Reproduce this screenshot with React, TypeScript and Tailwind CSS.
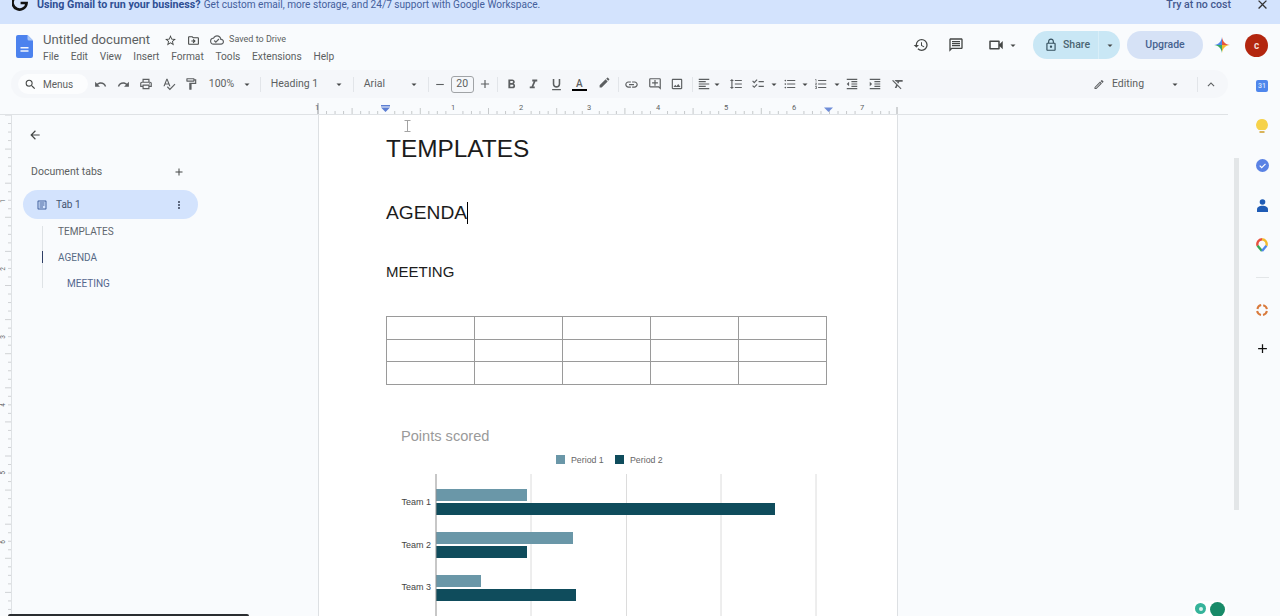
import type { ReactNode } from "react";
import {
  MdAdd,
  MdArrowBack,
  MdArrowDropDown,
  MdClose,
  MdEdit,
  MdExpandLess,
  MdFormatAlignLeft,
  MdFormatBold,
  MdFormatClear,
  MdFormatIndentDecrease,
  MdFormatIndentIncrease,
  MdFormatItalic,
  MdFormatLineSpacing,
  MdFormatListBulleted,
  MdFormatListNumbered,
  MdFormatUnderlined,
  MdHistory,
  MdLink,
  MdMoreVert,
  MdOutlineAddComment,
  MdOutlineArticle,
  MdOutlineChecklist,
  MdOutlineCloudDone,
  MdOutlineDriveFileMove,
  MdOutlineEdit,
  MdOutlineFormatPaint,
  MdOutlineImage,
  MdOutlineLocalPrintshop,
  MdOutlineLock,
  MdOutlineMessage,
  MdOutlineSpellcheck,
  MdOutlineVideocam,
  MdRedo,
  MdRemove,
  MdSearch,
  MdStarBorder,
  MdUndo,
} from "react-icons/md";

const menus = ["File", "Edit", "View", "Insert", "Format", "Tools", "Extensions", "Help"];

export default function App() {
  return (
    <div className="relative flex h-[616px] w-[1280px] flex-col overflow-hidden bg-[#f9fbfd] font-['Roboto',sans-serif] text-[#444746]">
      <Banner />
      <TitleRow />
      <div className="flex min-h-0 flex-1">
        <div className="flex min-w-0 flex-1 flex-col">
          <Toolbar />
          <Ruler />
          <div className="flex min-h-0 flex-1">
            <VerticalRuler />
            <Sidebar />
            <Page />
            <div className="ml-[336px] mt-[43px] h-[352px] w-[5px] bg-[#e3e6e8]" />
          </div>
        </div>
        <SidePanel />
      </div>
      {/* bits lying over the page */}
      <div className="absolute bottom-0 left-[8px] h-[2px] w-[241px] rounded-t-sm bg-[#2a2d30]" />
      <div className="absolute bottom-0 left-[1193px] flex h-[15px] w-[34px] items-start gap-[4px] rounded-t-md bg-white pl-[2px] pt-[1px]">
        <div className="mt-[1px] flex h-[11px] w-[11px] items-center justify-center rounded-full bg-[#35b39a]">
          <div className="h-[4px] w-[4px] rounded-full bg-[#d8f3ec]" />
        </div>
        <div className="h-[15px] w-[15px] rounded-full bg-[#188a68]" />
      </div>
    </div>
  );
}

function Banner() {
  return (
    <div className="h-6 shrink-0 overflow-hidden bg-[#d3e3fd]">
      <div className="relative flex h-[10px] items-center text-[10.1px] leading-[10px] text-[#44609c]">
        <svg viewBox="0 0 16 16" className="absolute left-[12px] top-[-5px] h-[16px] w-[16px]" fill="none">
          <path d="M13.4 3.6A7 7 0 1 0 14.6 8H8.6" stroke="#111" strokeWidth="2.6" />
        </svg>
        <span className="ml-[37px] text-[10.7px] font-bold text-[#2f4f94]">Using Gmail to run your business?</span>
        <span className="ml-[3px]">Get custom email, more storage, and 24/7 support with Google Workspace.</span>
        <span className="ml-auto text-[10.6px] font-medium text-[#44598f]">Try at no cost</span>
        <MdClose className="-mt-[2px] ml-[24px] mr-[10px] text-[#333] text-[15px]" />
      </div>
    </div>
  );
}

function TitleRow() {
  return (
    <div className="flex h-[42px] shrink-0 items-start">
      <DocsLogo />
      <div className="ml-[10px] pt-[9px]">
        <div className="flex h-[14px] items-center">
          <span className="text-[13.1px] text-[#5c5f61]">Untitled document</span>
          <MdStarBorder className="ml-[14px] text-[13px] text-[#444746]" />
          <MdOutlineDriveFileMove className="ml-[10px] text-[13px] text-[#444746]" />
          <MdOutlineCloudDone className="ml-[10px] text-[14px] text-[#5c5f61]" />
          <span className="ml-[5px] text-[9px] text-[#5c5f61]">Saved to Drive</span>
        </div>
        <div className="mt-[3px] flex h-[14px] items-center gap-[11.7px] text-[10.2px] text-[#5c5f61]">
          {menus.map((m) => (
            <span key={m}>{m}</span>
          ))}
        </div>
      </div>
      <div className="ml-auto mr-[12px] mt-[7px] flex h-[28px] items-center">
        <MdHistory className="text-[16px] text-[#444746]" />
        <MdOutlineMessage className="ml-[19px] text-[16px] text-[#444746]" />
        <MdOutlineVideocam className="ml-[23px] text-[18px] text-[#444746]" />
        <Caret className="ml-[2px]" />
        <div className="ml-[14px] flex h-[28px] w-[87px] items-center rounded-full bg-[#c9e7f5] text-[10.5px] font-medium text-[#4b6472]">
          <MdOutlineLock className="ml-[11px] text-[14px] text-[#35505e]" />
          <span className="ml-[5px]">Share</span>
          <div className="ml-auto flex h-full w-[22px] items-center justify-center border-l border-[#d8eef8]">
            <Caret className="text-[#35505e]" />
          </div>
        </div>
        <div className="ml-[7px] flex h-[28px] w-[76px] items-center justify-center rounded-full bg-[#d6e2f6] text-[10.5px] font-medium text-[#47628f]">
          Upgrade
        </div>
        <GeminiMark />
        <div className="ml-[15px] flex h-[23px] w-[23px] items-center justify-center rounded-full bg-[#b3260f] text-[10px] font-bold text-[#f5dcd6]">
          c
        </div>
      </div>
    </div>
  );
}

function DocsLogo() {
  return (
    <svg viewBox="0 0 17 23" className="ml-[16px] mt-[11px] h-[23px] w-[17px] shrink-0">
      <path d="M2 0h9.5L17 5.5V21a2 2 0 0 1-2 2H2a2 2 0 0 1-2-2V2a2 2 0 0 1 2-2z" fill="#4c82ee" />
      <path d="M11.5 0L17 5.5h-4a1.5 1.5 0 0 1-1.5-1.5z" fill="#a9c6f7" />
      <path d="M4.5 12h8v1.4h-8zM4.5 15.3h8v1.4h-8z" fill="#f2f6fd" />
    </svg>
  );
}

function GeminiMark() {
  return (
    <svg viewBox="0 0 16 16" className="ml-[11px] h-[16px] w-[16px] shrink-0">
      <path d="M8 0C8.6 4.6 11.4 7.4 16 8H8z" fill="#e8563f" />
      <path d="M8 0C7.4 4.6 4.6 7.4 0 8h8z" fill="#4f86ec" />
      <path d="M0 8C4.6 8.6 7.4 11.4 8 16V8z" fill="#37a866" />
      <path d="M8 16C8.6 11.4 11.4 8.6 16 8H8z" fill="#f2bb2f" />
    </svg>
  );
}

function Caret({ className = "" }: { className?: string }) {
  return <MdArrowDropDown className={`w-[12px] shrink-0 text-[15px] text-[#444746] ${className}`} />;
}

function Divider({ className = "" }: { className?: string }) {
  return <div className={`h-[15px] w-px shrink-0 bg-[#e2e5e9] ${className}`} />;
}

function Cell({ children, className = "" }: { children: ReactNode; className?: string }) {
  return <div className={`flex h-full w-[22.75px] shrink-0 items-center justify-center ${className}`}>{children}</div>;
}

function Toolbar() {
  return (
    <div className="ml-[11px] mt-1 flex h-[28px] w-[1217px] shrink-0 items-center rounded-full bg-[#f5f7fa] text-[10.5px] text-[#5c5f61]">
      <div className="ml-[7px] flex h-[20px] w-[70px] shrink-0 items-center rounded-full bg-[#fcfdfe]">
        <MdSearch className="ml-[6px] text-[13px] text-[#444746]" />
        <span className="ml-[6px] text-[10px]">Menus</span>
      </div>
      <Cell className="ml-[1px]"><MdUndo className="text-[13px]" /></Cell>
      <Cell><MdRedo className="text-[13px]" /></Cell>
      <Cell><MdOutlineLocalPrintshop className="text-[14px]" /></Cell>
      <Cell><MdOutlineSpellcheck className="text-[14px]" /></Cell>
      <Cell><MdOutlineFormatPaint className="text-[14px]" /></Cell>
      <span className="ml-[6px] w-[26px] shrink-0">100%</span>
      <Caret className="ml-[6px]" />
      <Divider className="ml-[7px]" />
      <span className="ml-[10px] w-[62px] shrink-0">Heading 1</span>
      <Caret />
      <Divider className="ml-[8px]" />
      <span className="ml-[10px] w-[44px] shrink-0">Arial</span>
      <Caret />
      <Divider className="ml-[8px]" />
      <MdRemove className="ml-[4px] w-[14px] shrink-0 text-[13px]" />
      <div className="ml-[4px] flex h-[17px] w-[23px] shrink-0 items-center justify-center rounded-[3px] border border-[#a0a3a6] text-[10.5px]">
        20
      </div>
      <MdAdd className="ml-[4px] w-[14px] shrink-0 text-[14px]" />
      <Divider className="ml-[5px]" />
      <Cell className="ml-[2px]"><MdFormatBold className="text-[15px]" /></Cell>
      <Cell><MdFormatItalic className="text-[15px]" /></Cell>
      <Cell><MdFormatUnderlined className="text-[15px]" /></Cell>
      <Cell>
        <div className="flex flex-col items-center">
          <span className="text-[10px] font-medium leading-[11px]">A</span>
          <div className="h-[2px] w-[15px] bg-black" />
        </div>
      </Cell>
      <Cell className="ml-[2.5px]"><MdEdit className="mb-[3px] text-[13px]" /></Cell>
      <Divider className="ml-[2px]" />
      <Cell className="ml-[1.5px]"><MdLink className="text-[15px]" /></Cell>
      <Cell><MdOutlineAddComment className="text-[14px]" /></Cell>
      <Cell><MdOutlineImage className="text-[14px]" /></Cell>
      <Divider className="ml-[3.5px]" />
      <MdFormatAlignLeft className="ml-[4px] w-[14px] shrink-0 text-[14px]" />
      <Caret />
      <MdFormatLineSpacing className="ml-[6px] w-[14px] shrink-0 text-[14px]" />
      <MdOutlineChecklist className="ml-[8px] w-[14px] shrink-0 text-[14px]" />
      <Caret className="ml-[3px]" />
      <MdFormatListBulleted className="ml-[3px] w-[14px] shrink-0 text-[14px]" />
      <Caret className="ml-[2px]" />
      <MdFormatListNumbered className="ml-[3px] w-[14px] shrink-0 text-[14px]" />
      <Caret className="ml-[3px]" />
      <MdFormatIndentDecrease className="ml-[2px] w-[14px] shrink-0 text-[14px]" />
      <MdFormatIndentIncrease className="ml-[9px] w-[14px] shrink-0 text-[14px]" />
      <MdFormatClear className="ml-[9px] w-[14px] shrink-0 text-[14px]" />
      <div className="ml-auto flex items-center pr-[10px]">
        <MdOutlineEdit className="w-[12px] text-[13px]" />
        <span className="ml-[7px] w-[33px] text-[10.5px]">Editing</span>
        <Caret className="ml-[24px]" />
        <Divider className="ml-[16px]" />
        <MdExpandLess className="ml-[6px] w-[14px] text-[15px]" />
      </div>
    </div>
  );
}

function Ruler() {
  const ticks = Array.from({ length: 68 }, (_, i) => i);
  return (
    <div className="h-[17px] w-[1228px] shrink-0 border-b border-[#dfe2e5]">
      <svg viewBox="0 0 1228 16" className="h-[16px] w-[1228px]">
        {ticks.map((i) => {
          const x = 318 + i * 8.525;
          const h = i % 8 === 0 ? 0 : i % 4 === 0 ? 6 : 3;
          return h > 0 && x < 897 ? (
            <line key={i} x1={x} x2={x} y1={16 - h} y2={16} stroke="#b9bcbe" strokeWidth="0.8" />
          ) : null;
        })}
        <line x1="318" x2="318" y1="5" y2="16" stroke="#8f9296" />
        <line x1="897" x2="897" y1="9" y2="16" stroke="#a9acae" />
        {[
          [317, "1"],
          [453, "1"],
          [521, "2"],
          [589, "3"],
          [658, "4"],
          [726, "5"],
          [794, "6"],
          [862, "7"],
        ].map(([x, t]) => (
          <text key={x} x={x} y="12" textAnchor="middle" fontSize="7.5" fill="#5c5f61" fontFamily="Roboto, sans-serif">
            {t}
          </text>
        ))}
        <path d="M381 7h9v1.5h-9zM381 9.5h9L385.5 14z" fill="#5d7fd3" />
        <path d="M824 9.5h9L828.5 14z" fill="#6f8dd8" />
      </svg>
    </div>
  );
}

function VerticalRuler() {
  const ticks = Array.from({ length: 60 }, (_, i) => i);
  return (
    <div className="h-full w-[12px] shrink-0 border-r border-[#dfe2e5]">
      <svg viewBox="0 0 11 501" className="h-[501px] w-[11px]">
        {ticks.map((i) => (
          <line key={i} x1={i % 4 === 0 ? 5 : 8} x2="11" y1={i * 8.525} y2={i * 8.525} stroke="#c5c8ca" strokeWidth="0.8" />
        ))}
        {[
          [86, "1"],
          [154, "2"],
          [222, "3"],
          [290, "4"],
          [358, "5"],
          [427, "6"],
        ].map(([y, t]) => (
          <text
            key={y}
            x="5"
            y={y}
            textAnchor="middle"
            fontSize="6.5"
            fill="#5c5f61"
            fontFamily="Roboto, sans-serif"
            transform={`rotate(-90 5 ${y})`}
          >
            {t}
          </text>
        ))}
      </svg>
    </div>
  );
}

function Sidebar() {
  return (
    <div className="w-[306px] shrink-0 text-[10.5px]">
      <MdArrowBack className="ml-[16px] mt-[13px] text-[14px] text-[#444746]" />
      <div className="ml-[19px] mt-[23px] flex h-[14px] w-[154px] items-center justify-between text-[#5c5f61]">
        <span>Document tabs</span>
        <MdAdd className="text-[12px] text-[#444746]" />
      </div>
      <div className="ml-[11px] mt-[11px] flex h-[29px] w-[175px] items-center rounded-full bg-[#d3e3fd] text-[#44536f]">
        <MdOutlineArticle className="ml-[13px] text-[12px] text-[#3f5f9c]" />
        <span className="ml-[8px] text-[10px]">Tab 1</span>
        <MdMoreVert className="ml-auto mr-[13px] text-[12px] text-[#444f63]" />
      </div>
      <div className="ml-[30px] mt-[7px] flex h-[62px] flex-col border-l border-[#dfe3e6] text-[10px]">
        <span className="-mt-2 ml-[15px] flex h-[26px] shrink-0 items-center text-[#60666d]">TEMPLATES</span>
        <span className="relative ml-[15px] flex h-[26px] shrink-0 items-center text-[#566a85]">
          AGENDA
          <span className="absolute left-[-16px] top-[7px] h-[12px] w-px bg-[#2f3f66]" />
        </span>
        <span className="ml-[24px] flex h-[26px] shrink-0 items-center text-[#55678f]">MEETING</span>
      </div>
    </div>
  );
}

function Page() {
  return (
    <div className="relative w-[580px] shrink-0 overflow-hidden border-x border-[#dde0e3] bg-white font-['Liberation_Sans',Arial,sans-serif] text-[#1c1c1c]">
      <svg viewBox="0 0 7 12" className="absolute left-[85px] top-[5px] h-[12px] w-[7px]" fill="none" stroke="#a3a3a3">
        <path d="M0.5 0.5h6M3.5 0.5v11M0.5 11.5h6" />
      </svg>
      <div className="ml-[67px] mt-[18px] h-8 text-[24.4px] leading-8">TEMPLATES</div>
      <div className="ml-[67px] mt-[32px] flex h-8 items-center text-[19.2px]">
        AGENDA
        <span className="h-[22px] w-px bg-black" />
      </div>
      <div className="ml-[67px] mt-[35px] h-4 text-[15px] leading-4">MEETING</div>
      <table className="ml-[67px] mt-[36px] h-[69px] w-[441px] table-fixed border-collapse">
        <tbody>
          {[0, 1, 2].map((r) => (
            <tr key={r}>
              {[0, 1, 2, 3, 4].map((c) => (
                <td key={c} className="border border-[#9a9a9a]" />
              ))}
            </tr>
          ))}
        </tbody>
      </table>
      <Chart />
    </div>
  );
}

function Chart() {
  const grid = [531, 626.5, 721, 816];
  const bars = [
    [489, 527, "#6a97a8"],
    [503, 775, "#0f4c5c"],
    [532, 573, "#6a97a8"],
    [546, 527, "#0f4c5c"],
    [575, 481, "#6a97a8"],
    [589, 576, "#0f4c5c"],
  ] as const;
  return (
    <svg viewBox="386 426 441 190" className="ml-[67px] mt-[41px] h-[190px] w-[441px]" fontFamily="Liberation Sans, Arial, sans-serif">
      <text x="401" y="441" fontSize="14.6" fill="#9a9a9a">Points scored</text>
      <rect x="556" y="455" width="9" height="9" fill="#6a97a8" />
      <text x="571" y="463" fontSize="8.8" fill="#666">Period 1</text>
      <rect x="615" y="455" width="9" height="9" fill="#0f4c5c" />
      <text x="630" y="463" fontSize="8.8" fill="#666">Period 2</text>
      {grid.map((x) => (
        <line key={x} x1={x} x2={x} y1="474" y2="616" stroke="#dcdcdc" />
      ))}
      {bars.map(([y, x, fill]) => (
        <rect key={y} x="436" y={y} width={x - 436} height="12" fill={fill} />
      ))}
      <line x1="436" x2="436" y1="474" y2="616" stroke="#8f8f8f" />
      <text x="431" y="505" textAnchor="end" fontSize="9" fill="#444">Team 1</text>
      <text x="431" y="548" textAnchor="end" fontSize="9" fill="#444">Team 2</text>
      <text x="431" y="590" textAnchor="end" fontSize="9" fill="#444">Team 3</text>
    </svg>
  );
}

function SidePanel() {
  return (
    <div className="flex w-[36px] shrink-0 flex-col items-center text-[#111]">
      <div className="flex h-[39.75px] items-center">
        <div className="flex h-[12px] w-[12px] items-center justify-center rounded-[2px] bg-[#4f86ec] text-[7px] font-medium text-[#dbe7fb]">31</div>
      </div>
      <div className="flex h-[39.75px] items-center">
        <svg viewBox="0 0 12 14" className="h-[14px] w-[12px]">
          <path d="M6 0a6 6 0 0 1 3.5 10.8V11h-7v-.2A6 6 0 0 1 6 0z" fill="#f6d24a" />
          <rect x="3.5" y="12" width="5" height="2" fill="#d9b45a" />
        </svg>
      </div>
      <div className="flex h-[39.75px] items-center">
        <svg viewBox="0 0 13 13" className="h-[13px] w-[13px]">
          <circle cx="6.5" cy="6.5" r="6.5" fill="#5a82e4" />
          <path d="M3.7 6.7l2 2 3.8-3.8" stroke="#fff" strokeWidth="1.2" fill="none" />
        </svg>
      </div>
      <div className="flex h-[39.75px] items-center">
        <svg viewBox="0 0 11 13" className="h-[13px] w-[11px]">
          <circle cx="5.5" cy="3" r="2.8" fill="#1f5bb5" />
          <path d="M0 13v-2.5C0 8 2.5 6.8 5.5 6.8S11 8 11 10.5V13z" fill="#1f5bb5" />
        </svg>
      </div>
      <div className="flex h-[39.75px] items-center">
        <svg viewBox="0 0 12 14" className="h-[14px] w-[12px]" fill="none" strokeWidth="2.4">
          <path d="M1.6 7.8A5 5 0 0 1 6 1.2" stroke="#e8503e" />
          <path d="M6 1.2a5 5 0 0 1 4.4 6.6" stroke="#f2bb2f" />
          <path d="M1.6 7.8L6 13" stroke="#34a853" />
          <path d="M10.4 7.8L6 13" stroke="#4f86ec" />
        </svg>
      </div>
      <div className="mt-[12px] h-px w-[13px] bg-[#e3e6e8]" />
      <div className="mt-[12px] flex h-[40px] items-center">
        <svg viewBox="0 0 12 12" className="h-[12px] w-[12px]" fill="none" strokeWidth="2" stroke="#d97a3c">
          <path d="M1.4 5A5 5 0 0 1 5.2 1.1" />
          <path d="M7.2 1.2A5 5 0 0 1 10.9 5.2" />
          <path d="M10.9 7A5 5 0 0 1 7 10.9" />
          <path d="M5 10.9A5 5 0 0 1 1.1 7" />
        </svg>
      </div>
      <MdAdd className="mt-[11px] text-[15px] text-[#111]" />
    </div>
  );
}
